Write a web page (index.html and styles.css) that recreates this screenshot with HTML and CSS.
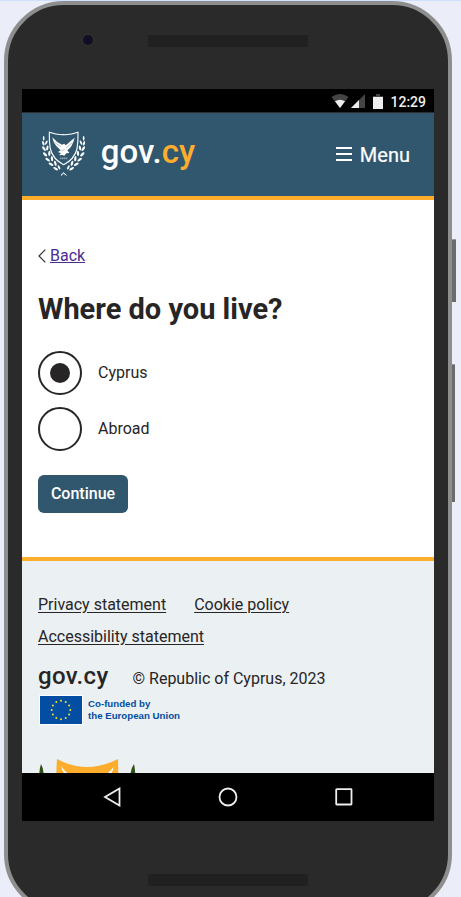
FILE: index.html
```
<!DOCTYPE html>
<html lang="en">
<head>
<meta charset="utf-8">
<title>Where do you live? - gov.cy</title>
<link rel="stylesheet" href="styles.css">
</head>
<body>
<div class="phone">
  <div class="bezel-top"><span class="camera"></span><span class="speaker"></span></div>
  <div class="screen">
    <div class="status">
      <svg class="wifi" width="18" height="14" viewBox="0 0 18 14"><path d="M0.500 3Q9 -3 17.500 3L9 14Z" fill="#444"/><path d="M4 7.300Q9 4 14 7.300L9 14Z" fill="#eee"/></svg>
      <svg class="signal" width="14" height="14" viewBox="0 0 14 14"><path d="M14 0V14H0Z" fill="#444"/><path d="M8 6V14H0Z" fill="#eee"/></svg>
      <svg class="battery" width="10" height="15" viewBox="0 0 10 15"><path d="M3 0H7V2H10V5H0V2H3Z" fill="#444"/><path d="M0 3H10V15H0Z" fill="#eee"/></svg>
      <span>12:29</span>
    </div>
    <header class="header">
      <svg class="emblem" width="42.67" height="46" viewBox="60 64 128 138">
        <defs>
          <g id="branch" fill="#fff">
            <path d="M117 197L125 190L133 197" fill="none" stroke="#fff" stroke-width="2.500"/>
            <ellipse cx="65" cy="86" rx="2.500" ry="7"/>
            <ellipse cx="64" cy="101" rx="3" ry="7" transform="rotate(-20 64 101)"/>
            <ellipse cx="73" cy="99" rx="2.800" ry="7" transform="rotate(25 73 99)"/>
            <ellipse cx="66" cy="117" rx="3.400" ry="8" transform="rotate(-35 66 117)"/>
            <ellipse cx="76" cy="115" rx="3.200" ry="7.500" transform="rotate(12 76 115)"/>
            <ellipse cx="69" cy="134" rx="3.500" ry="8" transform="rotate(-45 69 134)"/>
            <ellipse cx="82" cy="131" rx="3.400" ry="8" transform="rotate(4 82 131)"/>
            <ellipse cx="77" cy="150" rx="3.500" ry="8" transform="rotate(-55 77 150)"/>
            <ellipse cx="90" cy="147" rx="3.400" ry="8" transform="rotate(-5 90 147)"/>
            <ellipse cx="87" cy="164" rx="3.500" ry="8" transform="rotate(-60 87 164)"/>
            <ellipse cx="100" cy="161" rx="3.400" ry="8" transform="rotate(-18 100 161)"/>
            <ellipse cx="101" cy="177" rx="3.400" ry="8" transform="rotate(-60 101 177)"/>
            <ellipse cx="111" cy="173" rx="3" ry="7" transform="rotate(-25 111 173)"/>
          </g>
        </defs>
        <use href="#branch"/>
        <use href="#branch" transform="translate(250 0) scale(-1 1)"/>
        <path d="M82 68Q103 76 125 75Q147 76 168 68Q169 93 165 118Q157 149 125 165Q93 149 85 118Q81 93 82 68Z" fill="#31576f" stroke="#fff" stroke-width="3.400"/>
        <path d="M91 83Q94 103 109 115L116 122L108 127L117 131L111 137L121 136L127 138L133 131L142 130L136 122Q151 112 158 84Q140 99 131 107L127 102L120 105Q103 98 91 83Z" fill="#fff"/>
        <path d="M98 98L117 112M151 99L132 115M118 124L128 119" stroke="#31576f" stroke-width="1"/>
        <path d="M114 146H136M116 143V149M122 143V149M128 143V149M134 143V149" stroke="#fff" stroke-width="1.800" opacity=".6"/>
      </svg>
      <span class="brand">gov.<b>cy</b></span>
      <span class="menu"><svg width="16" height="14" viewBox="0 0 16 14"><path d="M0 1H16M0 7H16M0 13H16" stroke="#fff" stroke-width="2"/></svg><span>Menu</span></span>
    </header>
    <main class="main">
      <div class="back"><svg width="8" height="14" viewBox="0 0 8 14"><path d="M7.300 0.600L1 7L7.300 13.400" fill="none" stroke="#333" stroke-width="1.200"/></svg><a href="#">Back</a></div>
      <h1>Where do you live?</h1>
      <label class="option"><span class="radio checked"></span>Cyprus</label>
      <label class="option"><span class="radio"></span>Abroad</label>
      <button class="continue" type="button">Continue</button>
    </main>
    <footer class="footer">
      <div class="links"><a href="#">Privacy statement</a><a href="#">Cookie policy</a><a href="#">Accessibility statement</a></div>
      <div class="copy"><strong>gov.cy</strong><span>© Republic of Cyprus, 2023</span></div>
      <div class="eu">
        <svg width="44" height="30" viewBox="0 0 44 30"><path d="M0 0H44V30H0Z" fill="#fff"/><path d="M1 1H43V29H1Z" fill="#034ea2"/>
          <g fill="#f5e51b"><circle cx="22" cy="5.700" r="1"/><circle cx="26.700" cy="7" r="1"/><circle cx="30.100" cy="10.400" r="1"/><circle cx="31.300" cy="15" r="1"/><circle cx="30.100" cy="19.600" r="1"/><circle cx="26.700" cy="23" r="1"/><circle cx="22" cy="24.300" r="1"/><circle cx="17.300" cy="23" r="1"/><circle cx="13.900" cy="19.600" r="1"/><circle cx="12.700" cy="15" r="1"/><circle cx="13.900" cy="10.400" r="1"/><circle cx="17.300" cy="7" r="1"/></g></svg>
        <span>Co-funded by<br>the European Union</span>
      </div>
      <svg class="arms" width="98" height="104" viewBox="0 0 98 104">
        <path d="M3 5Q7 12 5 24L2 26Q0 14 3 5ZM96 5Q91 12 93 24L97 26Q98 14 96 5Z" fill="#2d5016"/>
        <path d="M19 0Q34 8 49 8Q64 8 80 0Q81 30 78 50Q70 78 49 90Q28 78 20 50Q17 30 19 0Z" fill="#ffad2d"/>
        <path d="M23 7Q24 12 28 17L38 26L33 17Q27 13 23 7ZM75.500 8Q75 13 71 18L62 26L66 17Q72 13 75.500 8Z" fill="#fff"/>
      </svg>
    </footer>
    <nav class="nav">
      <svg width="20" height="20" viewBox="0 0 20 20"><path d="M17.500 1.500V18.500L3 10Z"/></svg>
      <svg width="20" height="20" viewBox="0 0 20 20"><circle cx="10" cy="10" r="8.500"/></svg>
      <svg width="20" height="20" viewBox="0 0 20 20"><rect x="2.200" y="2.200" width="15.300" height="15.300" rx=".5"/></svg>
    </nav>
  </div>
  <div class="bezel-bottom"><span class="speaker"></span></div>
  <span class="side power"></span><span class="side volume"></span>
</div>
</body>
</html>
```
FILE: styles.css
```
* { box-sizing: border-box; }
html { height: 897px; overflow: hidden; }
body { margin: 0; height: 897px; overflow: hidden; background: #ebeef8; border-top: 1px solid #cfe0fc; font: 16px/24px Roboto, "Liberation Sans", sans-serif; color: #272525; }
svg { display: block; flex: none; }
.phone { position: relative; width: 448px; height: 913px; margin-left: 4px; padding: 0 14px; border: 4px solid #8e8e8f; border-radius: 60px; background: #2a2a2a; }
.bezel-top { height: 84px; display: flex; padding: 30px 0 0 61px; gap: 55px; align-items: flex-start; }
.camera { width: 10px; height: 10px; border-radius: 50%; background: #120d25; box-shadow: 0 0 3px #3a3a32; }
.speaker { width: 160px; height: 12px; background: #202020; border-radius: 2px; }
.bezel-bottom { padding: 53px 0 0 126px; display: flex; }
.side { position: absolute; background: #6b6b6b; border-top: 1px solid #999; }
.power { left: 444px; top: 234px; width: 4px; height: 63px; }
.volume { left: 444px; top: 359px; width: 3px; height: 138px; }
.screen { width: 412px; height: 732px; display: flex; flex-direction: column; background: #fff; }
.status { height: 24px; flex: none; background: #000; border-bottom: 1px solid #2d2d2d; display: flex; align-items: center; justify-content: flex-end; padding: 1px 8px 0 0; color: #eee; font-size: 14px; font-weight: 500; }
.status span { padding-top: 1px; }
.signal { margin: 0 8px 0 2px; }
.battery { margin-right: 7px; }
.header { height: 87px; flex: none; background: #31576f; border-bottom: 4px solid #ffad2d; display: flex; align-items: center; padding: 0 24px 4px 20px; color: #fff; }
.emblem { margin-top: 3px; }
.brand { margin: -1px 0 0 16px; font-size: 33px; font-weight: 500; line-height: 40px; letter-spacing: .1px; }
.brand b { font-weight: 500; color: #ffad2d; }
.menu { margin-left: auto; display: flex; align-items: center; gap: 8px; font-size: 20px; padding-top: 3px; -webkit-text-stroke: .2px #fff; }
.menu span { padding-top: 2px; }
.menu svg { margin-top: -1px; }
.main { height: 357px; flex: none; padding: 44px 16px 0; }
.back { display: flex; align-items: center; gap: 4px; }
.back a { color: #4b2c92; }
h1 { margin: 23px 0 24px; font-size: 29px; line-height: 36px; font-weight: 700; }
.option { display: flex; align-items: center; gap: 16px; height: 44px; margin-bottom: 12px; }
.radio { width: 44px; height: 44px; border: 2px solid #272525; border-radius: 50%; display: grid; place-items: center; }
.checked::after { content: ""; width: 20px; height: 20px; border-radius: 50%; background: #272525; }
.continue { margin-top: 24px; width: 90px; height: 38px; padding: 0 0 1px; border: 0; border-radius: 6px; background: #31576f; color: #fff; font: 500 16px/24px Roboto, sans-serif; display: block; }
.footer { flex: 1; min-height: 0; overflow: hidden; padding: 28px 16px 0; border-top: 4px solid #ffad2d; background: #ebf0f3; }
.links { display: flex; flex-wrap: wrap; column-gap: 28px; }
.links a { color: #272525; line-height: 32px; text-underline-offset: 2px; }
.copy { display: flex; align-items: baseline; gap: 24px; margin-top: 5px; height: 36px; }
.copy strong { font-size: 24px; font-weight: 500; line-height: 36px; letter-spacing: .35px; }
.eu { display: flex; gap: 5px; margin: 1px 0 0 1px; color: #034ea2; font: bold 9.7px/12px "Liberation Sans", sans-serif; }
.eu span { padding-top: 3px; }
.arms { margin-top: 34px; }
.nav { height: 48px; flex: none; background: #000; display: flex; justify-content: center; align-items: center; gap: 96px; }
.nav svg { fill: none; stroke: #eee; stroke-width: 1.800; }
```
